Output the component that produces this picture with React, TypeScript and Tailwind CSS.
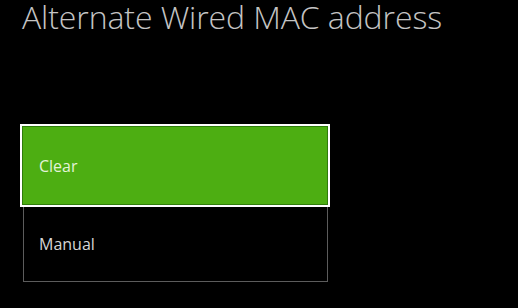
import React from 'react';

const App = () => {
  return (
    <div className="w-[518px] h-[308px] bg-black overflow-hidden font-['Open_Sans',sans-serif]">
      <h1 className="pl-[22px] pt-[1px] text-[32px] leading-[31px] font-light text-[#c4c4c4] tracking-[-0.1px]">
        Alternate Wired MAC address
      </h1>
      <div className="mt-[92px] flex flex-col">
        <div className="ml-[20px] w-[310px] h-[83px] border-2 border-white bg-[#4dae12] shadow-[inset_0_0_0_1px_#2f7c0b] flex items-center pl-[17px]">
          <span className="text-[16px] text-[#e4f3d8]">Clear</span>
        </div>
        <div className="ml-[23px] w-[305px] h-[75px] border border-t-0 border-[#5c5c5c] flex items-center pl-[15px]">
          <span className="text-[16px] text-[#d6d6d6]">Manual</span>
        </div>
      </div>
    </div>
  );
};

export default App;
